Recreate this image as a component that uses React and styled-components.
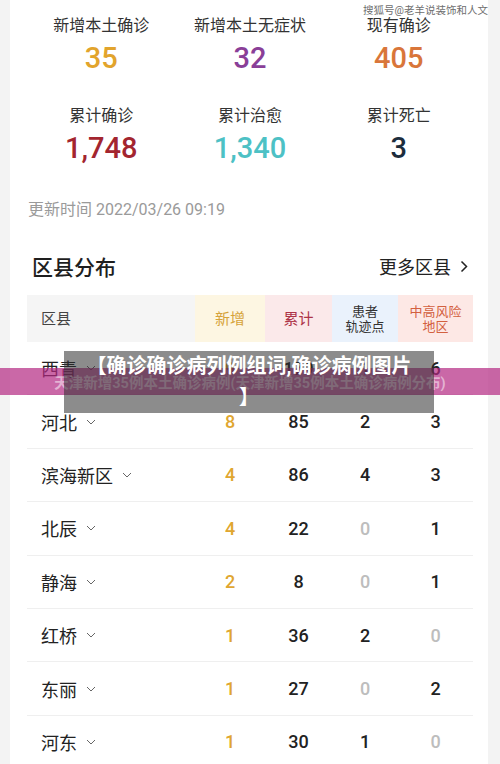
import React from "react";
import styled, { createGlobalStyle } from "styled-components";

const FONT = `Roboto, "Noto Sans CJK SC", "Noto Sans", sans-serif`;

const Global = createGlobalStyle`
  html, body { margin: 0; padding: 0; background: #f3f3f3; }
  body { font-family: ${FONT}; color: #222; }
`;

const Page = styled.div`
  position: relative;
  width: 500px;
  height: 764px;
  overflow: hidden;
  padding: 0 12px 0 10px;
  box-sizing: border-box;
`;

const Card = styled.div`
  background: #fff;
  min-height: 764px;
  padding: 15px 15px 0 17px;
  box-sizing: border-box;
`;

const StatsGrid = styled.div`
  display: grid;
  grid-template-columns: repeat(3, 1fr);
  row-gap: 29px;
`;

const Stat = styled.div`
  display: flex;
  flex-direction: column;
  align-items: center;
`;

const StatLabel = styled.div`
  font-size: 16px;
  line-height: 22px;
  color: #333;
`;

const StatValue = styled.div`
  margin-top: 3px;
  font-size: 29px;
  line-height: 36px;
  font-weight: 500;
  color: ${(p) => p.$color};
`;

const UpdateTime = styled.div`
  margin-top: 34px;
  font-size: 16px;
  line-height: 20px;
  color: #9a9a9a;
  padding-left: 1px;
`;

const SectionHead = styled.div`
  margin-top: 32px;
  display: flex;
  justify-content: space-between;
  align-items: center;
  height: 28px;
`;

const SectionTitle = styled.div`
  font-size: 21px;
  font-weight: 500;
  color: #1e1e1e;
  padding-left: 5px;
`;

const MoreLink = styled.div`
  display: flex;
  align-items: center;
  gap: 9px;
  font-size: 18px;
  color: #222;
  padding-right: 5px;
`;

const Table = styled.div`
  margin-top: 15px;
`;

const cols = `168px 70px 67px 66px 75px`;

const HeadRow = styled.div`
  display: grid;
  grid-template-columns: ${cols};
  height: 47px;
`;

const HeadCell = styled.div`
  display: flex;
  align-items: center;
  justify-content: ${(p) => (p.$left ? "flex-start" : "center")};
  padding-left: ${(p) => (p.$left ? "14px" : "0")};
  background: ${(p) => p.$bg};
  color: ${(p) => p.$color};
  font-size: ${(p) => (p.$small ? "13px" : "15px")};
  line-height: ${(p) => (p.$small ? "15px" : "20px")};
  text-align: center;
`;

const Row = styled.div`
  display: grid;
  grid-template-columns: ${cols};
  height: 53.4px;
  box-sizing: border-box;
  border-bottom: 1px solid #efefef;
  align-items: center;
`;

const NameCell = styled.div`
  display: flex;
  align-items: center;
  gap: 9px;
  padding-left: 14px;
  font-size: 18px;
  color: #222;
`;

const NumCell = styled.div`
  text-align: center;
  font-size: 18px;
  font-weight: 500;
  color: ${(p) => p.$color};
`;

const Watermark = styled.div`
  position: absolute;
  top: 4px;
  right: 12px;
  font-size: 10.5px;
  line-height: 14px;
  color: #555;
  opacity: 0.85;
`;

const Band = styled.div`
  position: absolute;
  left: 0;
  right: 0;
  top: 368px;
  height: 27px;
  background: rgba(180, 40, 130, 0.7);
  display: flex;
  align-items: center;
  justify-content: center;
  font-size: 14.5px;
  font-weight: 700;
  color: rgba(255, 255, 255, 0.5);
  white-space: nowrap;
`;

const TitleBox = styled.div`
  position: absolute;
  left: 64px;
  top: 351px;
  width: 370px;
  height: 62px;
  background: rgba(45, 45, 45, 0.55);
  color: #fff;
  font-size: 20px;
  font-weight: 700;
  line-height: 31px;
  text-align: center;
  white-space: nowrap;
`;

const Chevron = () => (
  <svg width="10" height="6" viewBox="0 0 10 6">
    <path d="M1 1 L5 5 L9 1" fill="none" stroke="#666" strokeWidth="1" />
  </svg>
);

const ChevronRight = () => (
  <svg width="8" height="13" viewBox="0 0 8 13">
    <path d="M1.5 1.5 L6.5 6.5 L1.5 11.5" fill="none" stroke="#222" strokeWidth="1.5" />
  </svg>
);

const stats = [
  { label: "新增本土确诊", value: "35", color: "#e2a42c" },
  { label: "新增本土无症状", value: "32", color: "#8a3f98" },
  { label: "现有确诊", value: "405", color: "#d9763a" },
  { label: "累计确诊", value: "1,748", color: "#a3252f" },
  { label: "累计治愈", value: "1,340", color: "#4dc1c5" },
  { label: "累计死亡", value: "3", color: "#1c2d3d" },
];

const rows = [
  ["西青", "9", "179", "1", "6"],
  ["河北", "8", "85", "2", "3"],
  ["滨海新区", "4", "86", "4", "3"],
  ["北辰", "4", "22", "0", "1"],
  ["静海", "2", "8", "0", "1"],
  ["红桥", "1", "36", "2", "0"],
  ["东丽", "1", "27", "0", "2"],
  ["河东", "1", "30", "1", "0"],
];

const tone = (v, isNew) => (isNew ? "#e0a630" : v === "0" ? "#bdbdbd" : "#222");

export default function App() {
  return (
    <>
      <Global />
      <Page>
        <Card>
          <StatsGrid>
            {stats.map((s) => (
              <Stat key={s.label}>
                <StatLabel>{s.label}</StatLabel>
                <StatValue $color={s.color}>{s.value}</StatValue>
              </Stat>
            ))}
          </StatsGrid>
          <UpdateTime>更新时间 2022/03/26 09:19</UpdateTime>
          <SectionHead>
            <SectionTitle>区县分布</SectionTitle>
            <MoreLink>
              更多区县
              <ChevronRight />
            </MoreLink>
          </SectionHead>
          <Table>
            <HeadRow>
              <HeadCell $left $bg="#f5f5f5" $color="#444">区县</HeadCell>
              <HeadCell $bg="#fdf6e2" $color="#d6a33a">新增</HeadCell>
              <HeadCell $bg="#fbe9ea" $color="#ad3347">累计</HeadCell>
              <HeadCell $small $bg="#eaf2fc" $color="#333">
                患者
                <br />
                轨迹点
              </HeadCell>
              <HeadCell $small $bg="#fde8e5" $color="#d3603f">
                中高风险
                <br />
                地区
              </HeadCell>
            </HeadRow>
            {rows.map(([name, n, t, tr, r]) => (
              <Row key={name}>
                <NameCell>
                  {name}
                  <Chevron />
                </NameCell>
                <NumCell $color={tone(n, true)}>{n}</NumCell>
                <NumCell $color={tone(t)}>{t}</NumCell>
                <NumCell $color={tone(tr)}>{tr}</NumCell>
                <NumCell $color={tone(r)}>{r}</NumCell>
              </Row>
            ))}
          </Table>
        </Card>
        <Watermark>搜狐号@老羊说装饰和人文</Watermark>
        <Band>天津新增35例本土确诊病例(天津新增35例本土确诊病例分布)</Band>
        <TitleBox>
          【确诊确诊病列例组词,确诊病例图片
          <br />】
        </TitleBox>
      </Page>
    </>
  );
}
